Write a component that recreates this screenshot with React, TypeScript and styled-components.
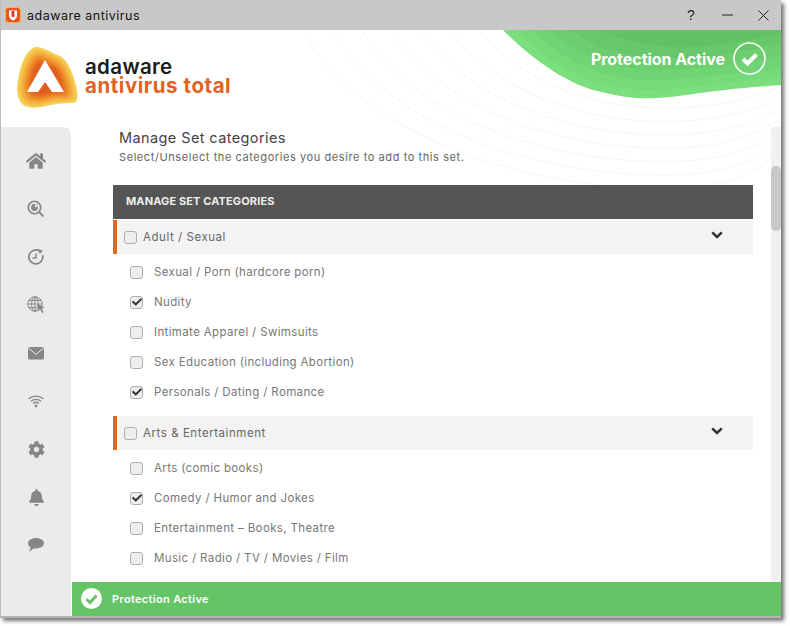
import React from 'react';
import styled, { createGlobalStyle } from 'styled-components';
import { FaHome, FaCog, FaBell, FaCheck } from 'react-icons/fa';

const Global = createGlobalStyle`
  html, body { margin: 0; padding: 0; background: #fff; }
  body { font-family: "Inter", "Liberation Sans", sans-serif; }
`;

const Page = styled.div`
  width: 790px;
  height: 626px;
  overflow: hidden;
`;
const Win = styled.div`
  position: relative;
  width: 781px;
  height: 618px;
  box-sizing: border-box;
  background: #fff;
  border-left: 1px solid #bdbdbd;
  border-bottom: 2px solid #b4b4b4;
  box-shadow: 3px 3px 4px rgba(0,0,0,.55);
  display: flex;
  flex-direction: column;
  overflow: hidden;
`;
const TitleBar = styled.div`
  height: 30px;
  flex: none;
  background: #c8c8c8;
  display: flex;
  align-items: center;
  padding-left: 4px;
  position: relative;
  z-index: 2;
`;
const TitleText = styled.span`
  margin-left: 6px;
  font-size: 12.5px;
  letter-spacing: .5px;
  color: #111;
`;
const Controls = styled.div`
  margin-left: auto;
  display: flex;
  align-items: center;
`;
const Ctl = styled.div`
  width: 36px;
  height: 30px;
  display: flex;
  align-items: center;
  justify-content: center;
  font-size: 14px;
  color: #222;
  font-family: "Liberation Sans", sans-serif;
`;
const Header = styled.div`
  height: 97px;
  flex: none;
  display: flex;
  align-items: center;
  padding-left: 14px;
  gap: 6px;
  position: relative;
  z-index: 1;
`;
const Deco = styled.svg`
  position: absolute;
  left: 0;
  top: 30px;
  pointer-events: none;
`;
const LogoMark = styled.svg`
  position: relative;
  flex: none;
  margin-top: -3px;
`;
const Brand = styled.div`
  display: flex;
  flex-direction: column;
  font-size: 20.5px;
  line-height: 18px;
  position: relative;
  margin-top: -5px;
`;
const BrandTop = styled.span`
  color: #1b1b1b;
  letter-spacing: .35px;
  font-weight: 600;
`;
const BrandBottom = styled.span`
  color: #e2621f;
  letter-spacing: .55px;
  font-weight: 700;
  margin-top: 1px;
`;
const Badge = styled.div`
  position: absolute;
  right: 15px;
  top: 12px;
  display: flex;
  align-items: center;
  gap: 8px;
  color: #fff;
  font-size: 16px;
  font-weight: 700;
  letter-spacing: -.04px;
`;
const Body = styled.div`
  flex: 1;
  min-height: 0;
  display: flex;
`;
const Sidebar = styled.nav`
  width: 70px;
  flex: none;
  background: #ebebeb;
  border-top-right-radius: 8px;
  display: flex;
  flex-direction: column;
  align-items: center;
  padding: 10px 0 0;
  box-sizing: border-box;
  margin-right: 1px;
`;
const NavItem = styled.div`
  width: 100%;
  height: 48px;
  flex: none;
  display: flex;
  align-items: center;
  justify-content: center;
  color: #868686;
`;
const Right = styled.div`
  flex: 1;
  min-width: 0;
  display: flex;
  flex-direction: column;
`;
const ScrollArea = styled.div`
  flex: 1;
  min-height: 0;
  display: flex;
  overflow: hidden;
`;
const Content = styled.div`
  flex: 1;
  min-width: 0;
  padding: 0 18px 0 41px;
  overflow: hidden;
`;
const Title = styled.h1`
  margin: 2px 0 0 6px;
  font-size: 14.5px;
  line-height: 18px;
  font-weight: 400;
  letter-spacing: .4px;
  color: #444;
`;
const Subtitle = styled.p`
  margin: 3px 0 0 6px;
  font-size: 11px;
  line-height: 14px;
  letter-spacing: .58px;
  color: #666;
`;
const SectionBar = styled.div`
  margin: 21px 0 1px;
  height: 34px;
  background: #555;
  color: #eee;
  display: flex;
  align-items: center;
  padding: 0 0 2px 13px;
  box-sizing: border-box;
  font-size: 11px;
  font-weight: 700;
  letter-spacing: .12px;
`;
const CatRow = styled.div`
  height: 34px;
  background: #f3f3f3;
  border-left: 4px solid #e2661c;
  display: flex;
  align-items: center;
  padding: 0 30px 0 7px;
  gap: 6px;
  font-size: 11.5px;
  letter-spacing: .55px;
  color: #666;
`;
const Chevron = styled.svg`
  margin-left: auto;
  margin-top: -4px;
  display: block;
`;
const Items = styled.div`
  padding: 3px 0 9px 17px;
`;
const Item = styled.div`
  height: 30px;
  display: flex;
  align-items: center;
  gap: 11px;
  font-size: 11.5px;
  letter-spacing: .36px;
  color: #777;
`;
const Box = styled.span`
  width: 13px;
  height: 13px;
  flex: none;
  box-sizing: border-box;
  border: 1px solid #aeaeae;
  border-radius: 3px;
  background: #eeeeee;
  display: flex;
  align-items: center;
  justify-content: center;
  color: #333;
`;
const Track = styled.div`
  width: 10px;
  flex: none;
  background: #f1f1f1;
  position: relative;
`;
const Thumb = styled.div`
  position: absolute;
  top: 39px;
  left: 0;
  width: 10px;
  height: 65px;
  border-radius: 5px;
  background: #c8c8c8;
`;
const StatusBar = styled.div`
  height: 34px;
  flex: none;
  background: #64c466;
  display: flex;
  align-items: center;
  padding: 0 0 1px 9px;
  box-sizing: border-box;
  gap: 10px;
  color: #fff;
  font-size: 11px;
  font-weight: 600;
  letter-spacing: .33px;
`;

const Check: React.FC<{ checked?: boolean }> = ({ checked }) => (
  <Box>{checked && <FaCheck size={10} />}</Box>
);

const blobD = 'M35 47C42 46 50 52 60 56C68 60 74 75 77 90C78 98 78 103 72 103C62 103 55 104 46 106C38 108 27 109 22 104C17 98 16 90 18 80C20 68 24 52 35 47Z';
const blobLayers: [string, number][] = [
  ['#f6cf57', 1], ['#f5c44c', .94], ['#f4b842', .88], ['#f2aa3a', .82], ['#f09b32', .76],
  ['#ed8c2b', .7], ['#e97d27', .64], ['#e66e22', .58], ['#e2601e', .52],
];

const Logo = () => (
  <LogoMark width="64" height="66" viewBox="15 44 64 66">
    {blobLayers.map(([c, s]) => (
      <path key={c} d={blobD} fill={c} transform={`translate(46 80) scale(${s}) translate(-46 -80)`} />
    ))}
    <path d="M45 60L64 92H52L45 82L38 92H27Z" fill="#fff" />
  </LogoMark>
);

const waveLayers: [string, string][] = [
  ['#7bdf7e', 'M502 30C530 58 565 84 600 92C625 98 640 99 655 98C680 97 715 89 781 85V30Z'],
  ['#76da79', 'M515 30C545 60 585 88 640 90C680 91 730 80 781 78V30Z'],
  ['#71d474', 'M530 30C558 56 595 80 650 80C690 80 740 72 781 68V30Z'],
  ['#6cce6f', 'M548 30C575 52 605 70 660 70C700 70 745 62 781 56V30Z'],
  ['#67c86a', 'M570 30C590 46 620 58 670 58C710 58 750 50 781 43V30Z'],
  ['#61c165', 'M600 30C625 42 650 47 680 47C715 47 750 40 781 33V30Z'],
];

const Deco1 = () => {
  const arcs = Array.from({ length: 7 }, (_, i) => i);
  return (
    <Deco width="780" height="155" viewBox="0 30 780 155">
      <g fill="none" stroke="#f6f6f6" strokeWidth="1">
        {arcs.map(i => {
          const x0 = 477 - 29 * i;
          const bot = 108 + 13.4 * i;
          return (
            <path
              key={i}
              d={`M${x0} 30C${x0 + 35} ${30 + (bot - 30) * 0.5} ${x0 + (660 - x0) * 0.5} ${bot} 665 ${bot}C715 ${bot} 755 ${bot - 10} 785 ${84 + 10 * i}`}
            />
          );
        })}
      </g>
      {waveLayers.map(([fill, d]) => (
        <path key={fill} d={d} fill={fill} />
      ))}
    </Deco>
  );
};

const Eye = () => (
  <svg width="18" height="18" viewBox="0 0 18 18" fill="none" stroke="#868686">
    <circle cx="7.5" cy="7.5" r="6.2" strokeWidth="1.6" />
    <circle cx="7.5" cy="7.5" r="3.4" fill="#868686" stroke="none" />
    <circle cx="9" cy="6" r="1.3" fill="#ebebeb" stroke="none" />
    <path d="M12 12L16.5 16.5" strokeWidth="1.8" />
  </svg>
);
const Clock = () => (
  <svg width="17" height="17" viewBox="0 0 17 17" fill="none" stroke="#868686">
    <path d="M14.6 6.2A7 7 0 1 1 11.5 2" strokeWidth="1.7" />
    <path d="M10.5 0L15 1.8L11.5 5Z" fill="#868686" stroke="none" />
    <path d="M8 4.5V9H4.5" strokeWidth="1.5" />
  </svg>
);
const Globe = () => (
  <svg width="19" height="18" viewBox="0 0 19 18" fill="none" stroke="#868686" strokeWidth="1">
    <circle cx="8" cy="8" r="7.2" />
    <ellipse cx="8" cy="8" rx="3.4" ry="7.2" />
    <path d="M.8 8H15.2M2 4.4H14M2 11.6H14M8 .8V15.2" />
    <path d="M9.5 6.5L18.5 11.8L15.2 12.6L17 16.5L15 17.6L13.2 13.8L10.6 15.8Z" fill="#868686" stroke="#ebebeb" strokeWidth=".6" />
  </svg>
);
const Mail = () => (
  <svg width="16" height="13" viewBox="0 0 16 13">
    <rect width="16" height="12.5" rx="1.5" fill="#868686" />
    <path d="M.5 1L8 7.5L15.5 1" fill="none" stroke="#ebebeb" strokeWidth="1" />
  </svg>
);
const Wifi = () => (
  <svg width="16" height="13" viewBox="0 0 16 13" fill="none" stroke="#868686" strokeWidth="1.4">
    <path d="M.6 3.8C4.8 .2 11.2 .2 15.4 3.8" />
    <path d="M2.8 6.2C5.8 3.7 10.2 3.7 13.2 6.2" />
    <path d="M5 8.5C6.8 7.1 9.2 7.1 11 8.5" />
    <circle cx="8" cy="11" r="1.4" fill="#868686" stroke="none" />
  </svg>
);
const Bubble = () => (
  <svg width="16" height="14" viewBox="0 0 16 14">
    <path d="M8 0C12.4 0 16 2.3 16 5.2C16 8.1 12.4 10.4 8 10.4C7.2 10.4 6.4 10.3 5.7 10.2C4.5 11.6 2.6 13 .8 13.4C1.8 12.2 2.5 10.8 2.6 9.4C1 8.4 0 6.9 0 5.2C0 2.3 3.6 0 8 0Z" fill="#868686" />
  </svg>
);
const Shield = () => (
  <svg width="16" height="16" viewBox="0 0 16 16">
    <rect x=".5" y=".5" width="15" height="15" rx="3" fill="#e8561f" />
    <rect x=".5" y=".5" width="15" height="15" rx="3" fill="none" stroke="#f6b24a" />
    <path d="M4 3.5H12V8.5C12 11 10 12.5 8 13.5C6 12.5 4 11 4 8.5Z" fill="#fff" />
    <path d="M6.5 4H9.5V8.5C9.5 9.5 8.5 10 8 10.3C7.5 10 6.5 9.5 6.5 8.5Z" fill="#d93a2b" />
  </svg>
);

const categories = [
  {
    name: 'Adult / Sexual',
    items: [
      ['Sexual / Porn (hardcore porn)', false],
      ['Nudity', true],
      ['Intimate Apparel / Swimsuits', false],
      ['Sex Education (including Abortion)', false],
      ['Personals / Dating / Romance', true],
    ],
  },
  {
    name: 'Arts & Entertainment',
    items: [
      ['Arts (comic books)', false],
      ['Comedy / Humor and Jokes', true],
      ['Entertainment – Books, Theatre', false],
      ['Music / Radio / TV / Movies / Film', false],
    ],
  },
] as { name: string; items: [string, boolean][] }[];

export default function App() {
  return (
    <Page>
      <Global />
      <Win>
        <TitleBar>
          <Shield />
          <TitleText>adaware antivirus</TitleText>
          <Controls>
            <Ctl>?</Ctl>
            <Ctl>
              <svg width="11" height="2"><path d="M0 1H11" stroke="#222" /></svg>
            </Ctl>
            <Ctl>
              <svg width="11" height="11"><path d="M.5 .5L10.5 10.5M10.5 .5L.5 10.5" stroke="#222" /></svg>
            </Ctl>
          </Controls>
        </TitleBar>
        <Deco1 />
        <Header>
          <Logo />
          <Brand>
            <BrandTop>adaware</BrandTop>
            <BrandBottom>antivirus total</BrandBottom>
          </Brand>
          <Badge>
            Protection Active
            <svg width="33" height="33" viewBox="0 0 33 33">
              <circle cx="16.5" cy="16.5" r="15.5" fill="none" stroke="#fff" strokeWidth="1.6" />
              <path d="M10 17L14.5 21.5L23.5 12.5" fill="none" stroke="#fff" strokeWidth="4" />
            </svg>
          </Badge>
        </Header>
        <Body>
          <Sidebar>
            <NavItem><FaHome size={20} /></NavItem>
            <NavItem><Eye /></NavItem>
            <NavItem><Clock /></NavItem>
            <NavItem><Globe /></NavItem>
            <NavItem><Mail /></NavItem>
            <NavItem><Wifi /></NavItem>
            <NavItem><FaCog size={17} /></NavItem>
            <NavItem><FaBell size={17} /></NavItem>
            <NavItem><Bubble /></NavItem>
          </Sidebar>
          <Right>
            <ScrollArea>
              <Content>
                <Title>Manage Set categories</Title>
                <Subtitle>Select/Unselect the categories you desire to add to this set.</Subtitle>
                <SectionBar>MANAGE SET CATEGORIES</SectionBar>
                {categories.map(c => (
                  <div key={c.name}>
                    <CatRow>
                      <Check />
                      {c.name}
                      <Chevron width="12" height="8" viewBox="0 0 12 8">
                        <path d="M1.2 1.4L6 6L10.8 1.4" fill="none" stroke="#333" strokeWidth="2.6" />
                      </Chevron>
                    </CatRow>
                    <Items>
                      {c.items.map(([label, on]) => (
                        <Item key={label}>
                          <Check checked={on} />
                          {label}
                        </Item>
                      ))}
                    </Items>
                  </div>
                ))}
              </Content>
              <Track><Thumb /></Track>
            </ScrollArea>
            <StatusBar>
              <svg width="21" height="21" viewBox="0 0 21 21">
                <circle cx="10.5" cy="10.5" r="10.5" fill="#fff" />
                <path d="M5.5 11L9 14.5L15.5 7.5" fill="none" stroke="#64c466" strokeWidth="3" />
              </svg>
              Protection Active
            </StatusBar>
          </Right>
        </Body>
      </Win>
    </Page>
  );
}
